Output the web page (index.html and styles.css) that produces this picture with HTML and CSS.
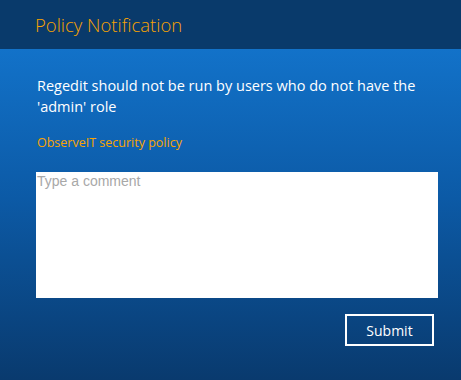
FILE: index.html
```html
<!DOCTYPE html>
<html lang="en">
<head>
    <meta charset="UTF-8">
    <meta name="viewport" content="width=device-width, initial-scale=1.0">
    <title>Policy Notification</title>
    <link rel="stylesheet" href="styles.css">
</head>
<body>
    <div class="window">
        <div class="header">
            <h1>Policy Notification</h1>
        </div>

        <div class="content">
            <p class="message">Regedit should not be run by users who do not have the 'admin' role</p>
            <a class="policy-link" href="#">ObserveIT security policy</a>

            <textarea class="comment" placeholder="Type a comment"></textarea>

            <div class="actions">
                <button type="button" class="btn-submit">Submit</button>
            </div>
        </div>
    </div>
</body>
</html>
```

FILE: styles.css
```css
:root {
    --header-color: #093a6b;
    --accent-color: #f9a400;
    --text-color: #ffffff;
    --placeholder-color: #a8a8a8;
}

* {
    margin: 0;
    padding: 0;
    box-sizing: border-box;
}

body {
    font-family: 'Open Sans', 'Noto Sans', sans-serif;
    background-color: var(--header-color);
}

.window {
    width: 461px;
    height: 380px;
    display: flex;
    flex-direction: column;
}

.header {
    height: 49px;
    background-color: var(--header-color);
    padding: 13px 0 0 35px;
}

.header h1 {
    font-size: 18.5px;
    font-weight: 300;
    color: var(--accent-color);
    line-height: 24px;
}

.content {
    flex: 1;
    background: linear-gradient(to bottom, #1272c9 0%, #0c5aa6 45%, #093a6e 100%);
    padding: 26px 23px 0 36px;
    display: flex;
    flex-direction: column;
}

.message {
    color: var(--text-color);
    font-size: 14.5px;
    line-height: 21px;
    padding-left: 1px;
}

.policy-link {
    color: var(--accent-color);
    font-size: 12.5px;
    text-decoration: none;
    margin-top: 17px;
    padding-left: 1px;
    line-height: 18px;
}

.comment {
    margin-top: 20px;
    width: 402px;
    height: 126px;
    border: none;
    resize: none;
    padding: 1px 1px;
    font-family: 'Liberation Sans', Arial, sans-serif;
    font-size: 14px;
    outline: none;
}

.comment::placeholder {
    color: var(--placeholder-color);
}

.actions {
    display: flex;
    justify-content: flex-end;
    margin-top: 16px;
    padding-right: 4px;
}

.btn-submit {
    width: 89px;
    height: 32px;
    background: transparent;
    border: 2px solid var(--text-color);
    color: var(--text-color);
    font-family: 'Open Sans', 'Noto Sans', sans-serif;
    font-size: 14px;
    cursor: pointer;
}
```
